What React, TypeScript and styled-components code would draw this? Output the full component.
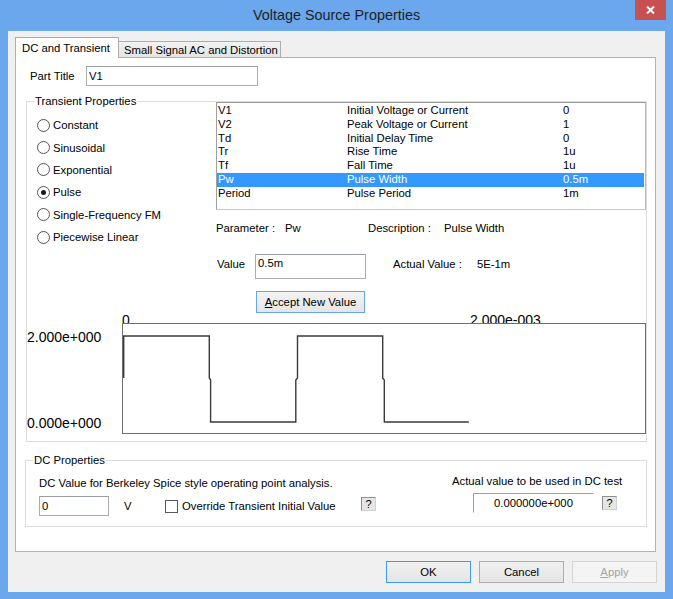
import React from "react";
import styled, { createGlobalStyle } from "styled-components";

const GlobalStyle = createGlobalStyle`
  html, body { margin: 0; padding: 0; }
  body {
    width: 673px; height: 599px; overflow: hidden;
    background: #6aa7ec;
    font-family: "Liberation Sans", Arial, sans-serif;
    font-size: 11.3px; color: #000;
  }
  * { box-sizing: border-box; }
`;

const Window = styled.div`
  width: 673px; height: 599px;
  background: #6aa7ec;
  display: flex; flex-direction: column;
`;

const TitleBar = styled.div`
  height: 31px; flex: none;
  display: grid; grid-template-columns: 1fr auto 1fr; align-items: start;
`;

const Title = styled.div`
  grid-column: 2;
  font-size: 14.4px; line-height: 31px; color: #1e1e1e;
  white-space: nowrap;
`;

const CloseButton = styled.div`
  grid-column: 3; justify-self: end;
  width: 31px; height: 20px; margin-right: 7px;
  background: #c75050;
  display: flex; align-items: center; justify-content: center;
`;

const Client = styled.div`
  flex: 1;
  margin: 0 8px 7px 8px;
  background: #f0f0f0;
  display: flex; flex-direction: column;
  padding: 6px 8px 0 7px;
`;

const TabStrip = styled.div`
  display: flex; align-items: flex-end;
  height: 21px; margin-bottom: -1px;
  position: relative; z-index: 1;
`;

const Tab = styled.div<{ $active?: boolean; $w: number }>`
  width: ${(p) => p.$w}px;
  height: ${(p) => (p.$active ? 21 : 16)}px;
  margin-bottom: ${(p) => (p.$active ? 0 : 1)}px;
  margin-left: ${(p) => (p.$active ? 0 : -1)}px;
  border: 1px solid #adadad; border-bottom: none;
  background: ${(p) => (p.$active ? "#fff" : "linear-gradient(#f2f2f2, #e4e4e4)")};
  padding: ${(p) => (p.$active ? "3px 0 0 6px" : "1px 0 0 5px")};
  line-height: 14px; white-space: nowrap;
`;

const Panel = styled.div`
  width: 641px; height: 495px;
  background: #fff; border: 1px solid #b4b4b4;
  display: flex; flex-direction: column;
`;

const PartRow = styled.div`
  display: flex; align-items: center;
  margin: 8px 0 0 14px;
`;

const Label = styled.span<{ $w?: number }>`
  display: inline-block; line-height: 14px; white-space: nowrap;
  ${(p) => (p.$w ? `width: ${p.$w}px; flex: none;` : "")}
`;

const TextInput = styled.input<{ $w: number; $h: number; $pb?: number }>`
  width: ${(p) => p.$w}px; height: ${(p) => p.$h}px; flex: none;
  margin: 0; padding: 0 0 ${(p) => p.$pb ?? 0}px 2px;
  border: 1px solid #abadb3; border-top-color: #9a9ea6;
  background: #fff; color: #000; font: inherit; outline: none;
`;

const Group = styled.div<{ $w: number; $ml: number; $mt: number }>`
  position: relative;
  width: ${(p) => p.$w}px;
  margin: ${(p) => p.$mt}px 0 0 ${(p) => p.$ml}px;
  border: 1px solid #dcdcdc;
`;

const GroupLegend = styled.span<{ $left: number }>`
  position: absolute; top: -8px; left: ${(p) => p.$left}px;
  padding: 0 1px; background: #fff; line-height: 14px; white-space: nowrap;
`;

const TopSection = styled.div`
  display: grid; grid-template-columns: 189px 1fr;
`;

const RadioList = styled.div`
  display: flex; flex-direction: column;
  padding: 12px 0 0 10px;
`;

const RadioRow = styled.div`
  height: 22.4px; display: flex; align-items: center; gap: 3px;
`;

const RadioCircle = styled.span<{ $checked?: boolean }>`
  width: 13px; height: 13px; flex: none; border-radius: 50%;
  border: 1px solid #555; background: #fff;
  display: flex; align-items: center; justify-content: center;
  &::after {
    content: ""; width: 5px; height: 5px; border-radius: 50%;
    background: ${(p) => (p.$checked ? "#1a1a1a" : "transparent")};
  }
`;

const RightColumn = styled.div`
  display: flex; flex-direction: column; align-items: flex-start;
`;

const ListBox = styled.div`
  width: 430px; height: 108px;
  border: 1px solid; border-color: #9a9a9a #b8b8b8 #c8c8c8 #a0a0a0;
  background: #fff; padding-top: 1px;
`;

const ListRow = styled.div<{ $selected?: boolean }>`
  height: 13.8px; line-height: 13.8px;
  display: grid; grid-template-columns: 129px 216px 1fr;
  padding-left: 1px; margin-right: 1px;
  background: ${(p) => (p.$selected ? "#3399ff" : "transparent")};
  color: ${(p) => (p.$selected ? "#fff" : "#000")};
  white-space: nowrap;
`;

const ParamRow = styled.div`
  display: flex; margin-top: 11px;
`;

const ValueRow = styled.div`
  display: flex; align-items: flex-start; margin-top: 19px;
  & > span { padding-top: 3px; }
`;

const PushButton = styled.button<{ $w: number; $variant?: "focus" | "normal" | "disabled" }>`
  width: ${(p) => p.$w}px; height: 22px; flex: none;
  margin: 0; padding: 0;
  font: inherit; line-height: 14px;
  border: 1px solid ${(p) =>
    p.$variant === "focus" ? "#3c9bf0" : p.$variant === "disabled" ? "#d5d5d5" : "#adadad"};
  background: ${(p) =>
    p.$variant === "disabled" ? "#f4f4f4" : "linear-gradient(#f0f0f0, #e5e5e5)"};
  color: ${(p) => (p.$variant === "disabled" ? "#a3a3a3" : "#000")};
  text-align: center;
`;

const AcceptButton = styled(PushButton)`
  margin: 12px 0 0 40px;
  border-color: #63a7ea;
  background: linear-gradient(#f3f3f3, #e6e6e6);
`;

const ChartSection = styled.div`
  display: grid; grid-template-columns: 95px 524px;
  padding-bottom: 7px;
  font-size: 14px;
`;

const TopAxis = styled.div`
  grid-column: 2; height: 10px; line-height: 10px;
  display: flex; white-space: nowrap;
`;

const YAxis = styled.div`
  display: flex; flex-direction: column; justify-content: space-between;
  height: 111px; padding: 7px 0 4px 0;
  line-height: 14px; white-space: nowrap;
`;

const DCContent = styled.div`
  display: grid; grid-template-columns: 426px 1fr;
  padding-bottom: 10px;
`;

const DCLeft = styled.div`
  padding: 15px 0 0 13px;
  display: flex; flex-direction: column; align-items: flex-start;
`;

const DCRight = styled.div`
  padding-top: 13px;
  display: flex; flex-direction: column; align-items: flex-start;
`;

const ControlRow = styled.div<{ $mt: number; $ml?: number }>`
  display: flex; align-items: center;
  margin: ${(p) => p.$mt}px 0 0 ${(p) => p.$ml ?? 0}px;
`;

const CheckBox = styled.span`
  width: 13px; height: 13px; flex: none;
  border: 1px solid #5a5a5a; background: #fff; margin-right: 4px;
`;

const HelpButton = styled.span<{ $lift?: number }>`
  width: 15px; height: 14px; flex: none;
  margin-top: ${(p) => -(p.$lift ?? 0)}px;
  border: 1px solid; border-color: #8f8f8f #d0d0d0 #d0d0d0 #8f8f8f;
  background: #e6e6e6;
  font-size: 11px; line-height: 12px; text-align: center;
`;

const ActualBox = styled.div`
  width: 121px; height: 20px; margin-right: 8px;
  border: 1px solid; border-color: #a0a0a0 #fff #fff #a0a0a0;
  line-height: 18px; text-align: center;
`;

const ButtonRow = styled.div`
  display: flex; justify-content: flex-end; gap: 8px;
  margin-top: 9px;
`;

const params: [string, string, string][] = [
  ["V1", "Initial Voltage or Current", "0"],
  ["V2", "Peak Voltage or Current", "1"],
  ["Td", "Initial Delay Time", "0"],
  ["Tr", "Rise Time", "1u"],
  ["Tf", "Fall Time", "1u"],
  ["Pw", "Pulse Width", "0.5m"],
  ["Period", "Pulse Period", "1m"],
];

const radios = [
  "Constant",
  "Sinusoidal",
  "Exponential",
  "Pulse",
  "Single-Frequency FM",
  "Piecewise Linear",
];

function PulseChart() {
  return (
    <svg width="524" height="111" viewBox="0 0 524 111">
      <rect x="0.5" y="0.5" width="523" height="110" fill="#fff" stroke="#6e6e6e" strokeWidth="1" />
      <path
        d="M1.7 55 L1.7 13 L87.3 13 L87.3 55 L88.6 57 L88.6 99 L173.8 99 L173.8 57 L175.5 55 L175.5 13 L260.7 13 L260.7 55 L262.3 57 L262.3 99 L346.8 99"
        fill="none"
        stroke="#3a3a3a"
        strokeWidth="1.4"
      />
    </svg>
  );
}

export default function App() {
  return (
    <>
      <GlobalStyle />
      <Window>
        <TitleBar>
          <Title>Voltage Source Properties</Title>
          <CloseButton>
            <svg width="9" height="8" viewBox="0 0 9 8">
              <path d="M1 0.5 L8 7.5 M8 0.5 L1 7.5" stroke="#fff" strokeWidth="2" />
            </svg>
          </CloseButton>
        </TitleBar>
        <Client>
          <TabStrip>
            <Tab $active $w={104}>DC and Transient</Tab>
            <Tab $w={163}>Small Signal AC and Distortion</Tab>
          </TabStrip>
          <Panel>
            <PartRow>
              <Label $w={56}>Part Title</Label>
              <TextInput $w={172} $h={20} defaultValue="V1" readOnly />
            </PartRow>

            <Group $w={621} $ml={10} $mt={15}>
              <GroupLegend $left={7}>Transient Properties</GroupLegend>
              <TopSection>
                <RadioList>
                  {radios.map((r) => (
                    <RadioRow key={r}>
                      <RadioCircle $checked={r === "Pulse"} />
                      <Label>{r}</Label>
                    </RadioRow>
                  ))}
                </RadioList>
                <RightColumn>
                  <ListBox>
                    {params.map(([n, d, v]) => (
                      <ListRow key={n} $selected={n === "Pw"}>
                        <span>{n}</span>
                        <span>{d}</span>
                        <span>{v}</span>
                      </ListRow>
                    ))}
                  </ListBox>
                  <ParamRow>
                    <Label $w={69}>Parameter :</Label>
                    <Label $w={83}>Pw</Label>
                    <Label $w={76}>Description :</Label>
                    <Label>Pulse Width</Label>
                  </ParamRow>
                  <ValueRow>
                    <Label $w={39} style={{ paddingLeft: 1 }}>Value</Label>
                    <TextInput $w={111} $h={25} $pb={7} defaultValue="0.5m" readOnly />
                    <Label $w={84} style={{ marginLeft: 27 }}>Actual Value :</Label>
                    <Label>5E-1m</Label>
                  </ValueRow>
                  <AcceptButton $w={109} type="button">
                    <u>A</u>ccept New Value
                  </AcceptButton>
                </RightColumn>
              </TopSection>
              <ChartSection>
                <TopAxis>
                  <Label $w={348}>0</Label>
                  <Label>2.000e-003</Label>
                </TopAxis>
                <YAxis>
                  <span>2.000e+000</span>
                  <span>0.000e+000</span>
                </YAxis>
                <PulseChart />
              </ChartSection>
            </Group>

            <Group $w={622} $ml={9} $mt={18}>
              <GroupLegend $left={7}>DC Properties</GroupLegend>
              <DCContent>
                <DCLeft>
                  <Label>DC Value for Berkeley Spice style operating point analysis.</Label>
                  <ControlRow $mt={6}>
                    <TextInput $w={70} $h={20} defaultValue="0" readOnly />
                    <Label $w={41} style={{ marginLeft: 15 }}>V</Label>
                    <CheckBox />
                    <Label $w={179}>Override Transient Initial Value</Label>
                    <HelpButton $lift={4}>?</HelpButton>
                  </ControlRow>
                </DCLeft>
                <DCRight>
                  <Label>Actual value to be used in DC test</Label>
                  <ControlRow $mt={5} $ml={21}>
                    <ActualBox>0.000000e+000</ActualBox>
                    <HelpButton>?</HelpButton>
                  </ControlRow>
                </DCRight>
              </DCContent>
            </Group>
          </Panel>
          <ButtonRow>
            <PushButton $w={85} $variant="focus" type="button">OK</PushButton>
            <PushButton $w={85} type="button">Cancel</PushButton>
            <PushButton $w={85} $variant="disabled" type="button">
              <u>A</u>pply
            </PushButton>
          </ButtonRow>
        </Client>
      </Window>
    </>
  );
}
